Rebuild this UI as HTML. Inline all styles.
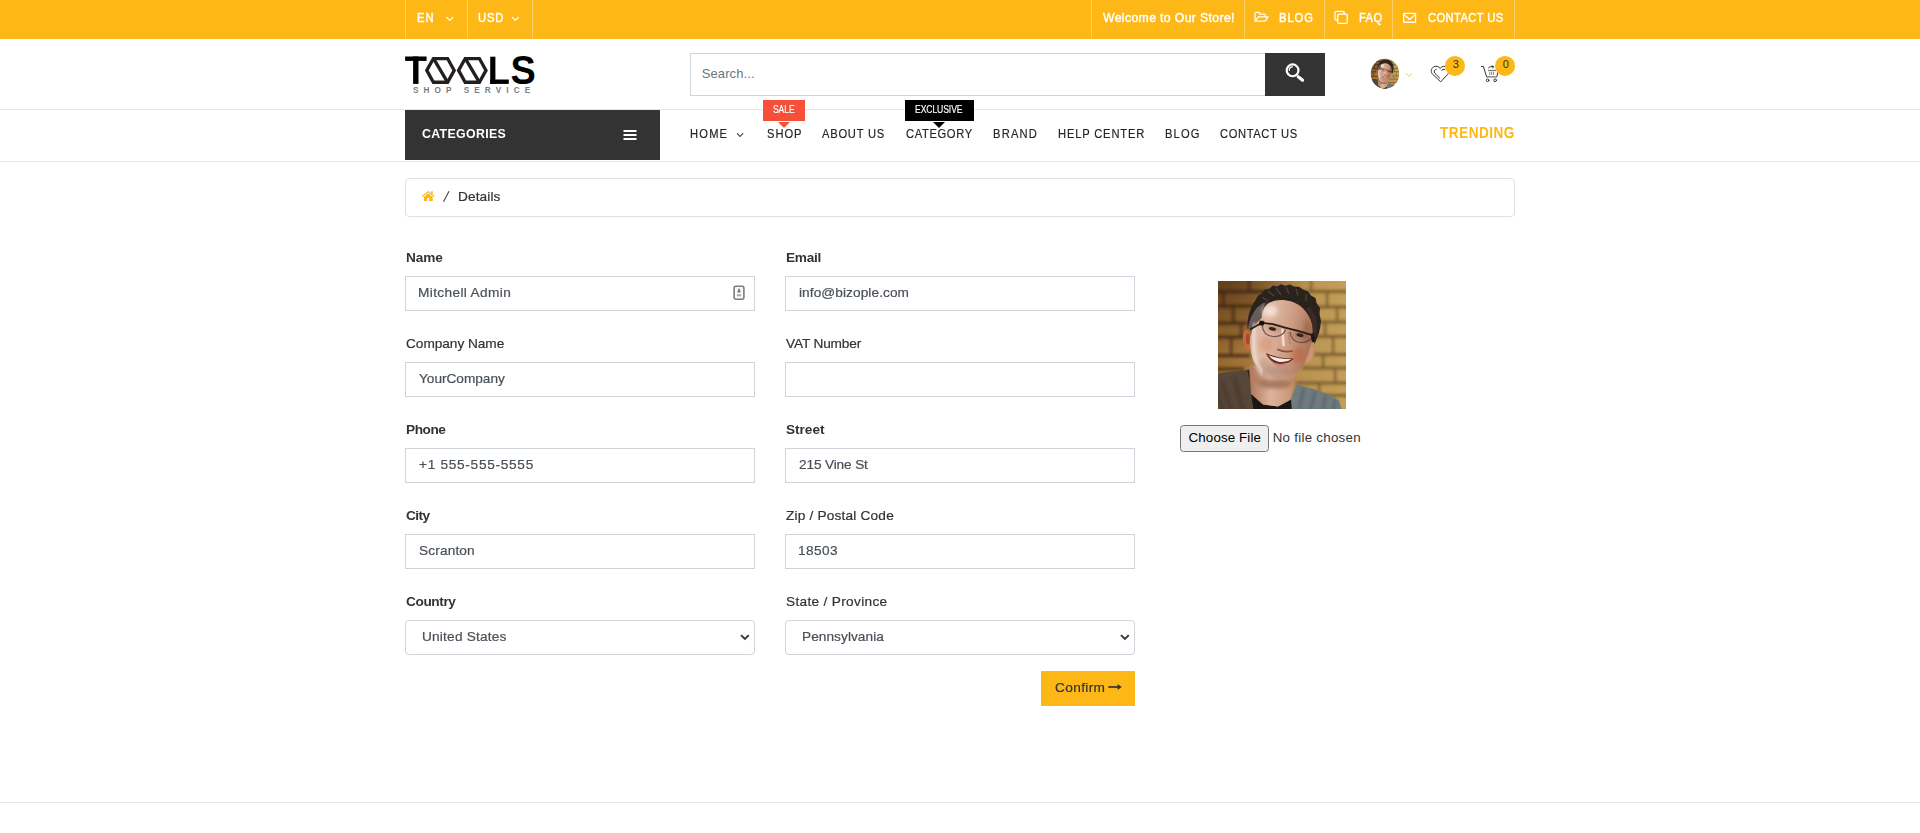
<!DOCTYPE html>
<html lang="en">
<head>
<meta charset="utf-8">
<title>Details | Tools Shop Service</title>
<style>
*{box-sizing:border-box;margin:0;padding:0}
html,body{width:1920px;height:833px;overflow:hidden;background:#fff}
body{font-family:"Liberation Sans",sans-serif;font-size:13px;color:#333}
#page{position:relative;width:1920px;height:833px;overflow:hidden;background:#fff}
.a{position:absolute;display:block}
.t{position:absolute;white-space:pre;line-height:1;transform-origin:0 0;font-family:"Liberation Sans",sans-serif}
a.t{text-decoration:none}
.tb{-webkit-text-stroke:.45px #fff}
.tb2{-webkit-text-stroke:.15px #fff}
.nv{-webkit-text-stroke:.18px currentColor}
.gp{text-rendering:geometricPrecision}
.bd{-webkit-text-stroke:.2px currentColor}
.topbar{left:0;top:0;width:1920px;height:39px;background:#fdb716}
.sep{top:0;width:1px;height:39px;background:rgba(255,255,255,.35)}
.hline{left:0;width:1920px;height:1px;background:#e6e6e6}
.field{height:35px;width:350px;border:1px solid #ced4da;background:#fff}
.sel{border-radius:4px}
svg{position:absolute;overflow:visible}
</style>
</head>

<body>
<div id="page">
<!-- top bar -->
<div class="a topbar"></div>
<i class="a sep" style="left:405px"></i><i class="a sep" style="left:467px"></i><i class="a sep" style="left:532px"></i>
<i class="a sep" style="left:1091px"></i><i class="a sep" style="left:1244px"></i><i class="a sep" style="left:1324px"></i><i class="a sep" style="left:1392px"></i><i class="a sep" style="left:1514px"></i>
<!-- header search -->
<div class="a" style="left:690px;top:53px;width:576px;height:43px;border:1px solid #ced4da;border-right:0;background:#fff"></div>
<div class="a" style="left:1265px;top:53px;width:60px;height:43px;background:#333"></div>
<!-- nav -->
<i class="a hline" style="top:109px"></i>
<i class="a hline" style="top:161px"></i>
<div class="a" style="left:405px;top:110px;width:255px;height:50px;background:#333"></div>
<div class="a" style="left:763px;top:100px;width:42px;height:21px;background:#f6503a"></div>
<div class="a" style="left:778px;top:122px;width:0;height:0;border-left:6px solid transparent;border-right:6px solid transparent;border-top:6px solid #f6503a"></div>
<div class="a" style="left:905px;top:100px;width:69px;height:21px;background:#000"></div>
<div class="a" style="left:933px;top:122px;width:0;height:0;border-left:6px solid transparent;border-right:6px solid transparent;border-top:6px solid #000"></div>
<!-- breadcrumb -->
<div class="a" style="left:405px;top:178px;width:1110px;height:39px;border:1px solid #dee2e6;border-radius:4px"></div>
<!-- form fields -->
<div class="a field" style="left:405px;top:276px"></div><div class="a field" style="left:785px;top:276px"></div>
<div class="a field" style="left:405px;top:362px"></div><div class="a field" style="left:785px;top:362px"></div>
<div class="a field" style="left:405px;top:448px"></div><div class="a field" style="left:785px;top:448px"></div>
<div class="a field" style="left:405px;top:534px"></div><div class="a field" style="left:785px;top:534px"></div>
<div class="a field sel" style="left:405px;top:620px"></div><div class="a field sel" style="left:785px;top:620px"></div>
<!-- confirm -->
<div class="a" style="left:1041px;top:671px;width:94px;height:35px;background:#fdb716"></div>
<!-- file button -->
<div class="a" style="left:1180px;top:425px;width:89px;height:27px;background:#efefef;border:1.5px solid #767676;border-radius:3.5px"></div>
<!-- footer line -->
<i class="a hline" style="top:802px"></i>

<!-- logo -->
<svg class="a" style="left:400px;top:50px" width="140" height="48" viewBox="400 50 140 48" aria-label="TOOLS shop service">
  <g fill="#000">
    <rect x="405.1" y="56.5" width="21.5" height="4.4"/>
    <rect x="413.1" y="56.5" width="5.4" height="27.4"/>
    <rect x="490.2" y="56.7" width="5.2" height="27.2"/>
    <rect x="490.2" y="79.5" width="18.6" height="4.4"/>
    <text transform="translate(510.45 84.0) scale(.94 1)" font-family="Liberation Sans, sans-serif" font-weight="700" font-size="40.3">S</text>
  </g>
  <g fill="none" stroke="#231f20" stroke-width="3.3" stroke-linejoin="miter">
    <path d="M426.8 70.4L433.4 58.55H447.6L454.2 70.4L447.6 82.25H433.4Z"/>
    <path d="M434 59.3L447.2 81.6"/>
    <path d="M458.6 70.4L465.2 58.55H479.4L486 70.4L479.4 82.25H465.2Z"/>
    <path d="M465.8 59.3L479 81.6"/>
  </g>
</svg>

<!-- icons -->
<svg class="a" style="left:0;top:0" width="1920" height="833" viewBox="0 0 1920 833">
  <!-- top bar chevrons -->
  <g fill="none" stroke="#fff" stroke-width="1.3" stroke-linecap="round" stroke-linejoin="round">
    <path d="M446.9 17.5L449.8 20.4L452.7 17.5"/>
    <path d="M512.4 17.5L515.3 20.4L518.2 17.5"/>
  </g>
  <!-- folder open -->
  <g fill="none" stroke="#fff" stroke-width="1.2" stroke-linejoin="round" stroke-linecap="round">
    <path d="M1255 20.6V13.2a.9.9 0 0 1 .9-.9H1258.8a.9.9 0 0 1 .9.9V14.2H1264.3a.9.9 0 0 1 .9.9V16.7"/>
    <path d="M1255.2 21.2L1258.3 16.9H1268.1L1265.2 21.2Z"/>
  </g>
  <!-- files -->
  <g stroke="#fff" stroke-width="1.3">
    <rect x="1334.95" y="11.4" width="9.2" height="8.6" rx="1.2" fill="none"/>
    <rect x="1337.7" y="14.05" width="9.55" height="9.25" rx="1.2" fill="#fdb716"/>
  </g>
  <!-- envelope -->
  <g fill="none" stroke="#fff" stroke-width="1.3" stroke-linejoin="round">
    <rect x="1403.65" y="13.4" width="11.9" height="8.85" rx=".6"/>
    <path d="M1403.9 14.6L1409.6 19.5L1415.3 14.6"/>
  </g>
  <!-- search magnifier -->
  <g fill="none" stroke="#fff" stroke-linecap="round">
    <circle cx="1292.6" cy="70.35" r="5.9" stroke-width="2.2"/>
    <path d="M1289.2 70.3A3.5 3.5 0 0 1 1292.5 66.9" stroke-width="1.2"/>
    <path d="M1298.2 76.7L1302.6 80.2" stroke-width="3.1"/>
  </g>
  <!-- user chevron -->
  <path d="M1406.2 73.6L1409 76.3L1411.8 73.6" fill="none" stroke="#fdb716" stroke-opacity=".8" stroke-width=".95" stroke-linecap="round" stroke-linejoin="round"/>
  <!-- heart -->
  <g fill="none" stroke="#333" stroke-width="1" stroke-linecap="round" stroke-linejoin="round">
    <path d="M1440.4 81.6L1432.6 74.2C1430.6 72.2 1430.9 68.6 1433.4 67C1435.7 65.6 1438.6 66.3 1440.2 68.4C1441.8 66.3 1444.8 65.6 1447 67C1449.5 68.6 1449.8 72.2 1447.8 74.2Z"/>
    <path d="M1436.2 69.3C1434.3 69.5 1433.4 71.8 1434.8 73.3L1439.8 78.2"/>
    <path d="M1441.6 70.2C1442.4 69.5 1443.6 69.2 1444.7 69.4"/>
  </g>
  <!-- cart -->
  <g fill="none" stroke="#333" stroke-width="1" stroke-linecap="round" stroke-linejoin="round">
    <path d="M1481.3 66.4H1483.4L1486.6 76.8"/>
    <path d="M1497.9 72.4L1496.8 76.8"/>
    <path d="M1488.5 67.9C1489.8 66.6 1491.6 66.3 1493.4 66.6M1492 65.9L1493.6 66.7L1492.6 68.1"/>
    <path d="M1489.8 72.2V74.6M1491.7 72.2V74.6M1493.6 72.2V74.6" stroke-width=".75" stroke-opacity=".8"/>
    <circle cx="1487.6" cy="80.3" r="1.35"/>
    <circle cx="1495.15" cy="80.3" r="1.35"/>
  </g>
  <path d="M1486.7 76.85H1496.8" stroke="#808080" stroke-width="1.4" fill="none"/>
  <path d="M1488.1 70.5H1496.2" stroke="#777" stroke-width="1.2" fill="none"/>
  <!-- count badges -->
  <circle cx="1455" cy="65.9" r="10" fill="#fdb716"/>
  <circle cx="1505" cy="65.9" r="10" fill="#fdb716"/>
  <!-- hamburger -->
  <g fill="#fff">
    <rect x="623.5" y="130" width="13" height="2"/>
    <rect x="623.5" y="134" width="13" height="2"/>
    <rect x="623.5" y="138" width="13" height="2"/>
  </g>
  <!-- HOME chevron -->
  <path d="M737.4 133.6L740.1 136.5L742.8 133.6" fill="none" stroke="#333" stroke-width="1.1" stroke-linecap="round" stroke-linejoin="round"/>
  <!-- breadcrumb home + slash -->
  <g fill="#fdb716">
    <path d="M428.25 190.9L434.6 196.1L433.9 196.9L428.25 192.3L422.6 196.9L421.9 196.1Z"/>
    <rect x="431.1" y="191.1" width="1.6" height="3"/>
    <path d="M428.25 193.3L432.7 196.9V200.9H429.2V198.1H427.2V200.9H423.9V196.9Z"/>
  </g>
  <path d="M443.5 201.8L449 191.2" stroke="#444" stroke-width="1.1" fill="none"/>
  <!-- autofill contact icon -->
  <rect x="734.1" y="286.3" width="9.8" height="12.9" rx="1.6" fill="#fafafa" stroke="#7c7c7c" stroke-width="1.6"/>
  <path d="M739 288.6C739.8 288.6 740 289.8 740.1 290.6L740.8 292.6H737.2L737.9 290.6C738 289.8 738.2 288.6 739 288.6Z" fill="#777"/>
  <rect x="736.9" y="294.2" width="4.2" height="2" fill="#aaa"/>
  <!-- select chevrons -->
  <g fill="none" stroke="#343a40" stroke-width="2" stroke-linejoin="miter">
    <path d="M741 635.1L744.9 638.9L748.8 635.1"/>
    <path d="M1121 635.1L1124.9 638.9L1128.8 635.1"/>
  </g>
  <!-- confirm arrow -->
  <g stroke="#333" fill="none">
    <path d="M1108.3 687H1118.5" stroke-width="1.7"/>
    <path d="M1117.6 683.9L1121.7 687L1117.6 690.1Z" fill="#333" stroke="none"/>
  </g>
</svg>

<!-- profile photo (vector approximation) -->
<svg class="a" style="left:1218px;top:281px;overflow:hidden" width="128" height="128" viewBox="0 0 128 128" role="img" aria-label="Mitchell Admin">
  <defs>
    <linearGradient id="bgG" x1="0" y1="0" x2="1" y2="0">
      <stop offset="0" stop-color="#94652e"/><stop offset=".3" stop-color="#a77a3a"/><stop offset=".62" stop-color="#b8914e"/><stop offset="1" stop-color="#c4a05b"/>
    </linearGradient>
    <radialGradient id="bgD" cx=".1" cy="-.05" r=".6">
      <stop offset="0" stop-color="#3d2410" stop-opacity=".7"/><stop offset="1" stop-color="#3d2410" stop-opacity="0"/>
    </radialGradient>
    <linearGradient id="faceG" x1="0" y1="0" x2="1" y2=".25">
      <stop offset="0" stop-color="#dcb9a8"/><stop offset=".35" stop-color="#dfb9a4"/><stop offset=".7" stop-color="#cd9c82"/><stop offset="1" stop-color="#ae785c"/>
    </linearGradient>
    <linearGradient id="neckG" x1="0" y1="0" x2="1" y2="0">
      <stop offset="0" stop-color="#ad7656"/><stop offset=".45" stop-color="#dcb49c"/><stop offset="1" stop-color="#c08e70"/>
    </linearGradient>
    <filter id="b1" x="-10%" y="-10%" width="120%" height="120%"><feGaussianBlur stdDeviation="1.4"/></filter>
    <filter id="b2" x="-10%" y="-10%" width="120%" height="120%"><feGaussianBlur stdDeviation=".55"/></filter>
    <filter id="bG" x="-5%" y="-5%" width="110%" height="110%"><feGaussianBlur stdDeviation=".6"/></filter>
    <filter id="b3" x="-20%" y="-20%" width="140%" height="140%"><feGaussianBlur stdDeviation="2.2"/></filter>
    <g id="phc">
      <rect x="-4" y="-4" width="136" height="136" fill="url(#bgG)"/>
      <rect x="-4" y="-4" width="136" height="136" fill="url(#bgD)"/>
      <!-- mortar -->
      <g filter="url(#b1)" fill="#38220e" fill-opacity=".8">
        <rect x="-4" y="9" width="60" height="3.2"/><rect x="-4" y="23.5" width="40" height="3.2"/><rect x="-4" y="40.5" width="34" height="3.2"/><rect x="-4" y="54.5" width="30" height="3.2"/><rect x="-4" y="73" width="36" height="3.2"/><rect x="-4" y="86.5" width="30" height="3"/>
        <rect x="4" y="11" width="2.4" height="13"/><rect x="14" y="26" width="2.4" height="15"/><rect x="22" y="43" width="2.2" height="12"/><rect x="12" y="57" width="2.2" height="16"/><rect x="30" y="-4" width="2.4" height="13"/>
      </g>
      <g filter="url(#b1)" fill="#644822" fill-opacity=".72">
        <rect x="70" y="9" width="62" height="3"/><rect x="96" y="24.5" width="36" height="3"/><rect x="100" y="39.5" width="32" height="3"/><rect x="98" y="54" width="34" height="3"/><rect x="96" y="72" width="36" height="3"/><rect x="84" y="85.5" width="48" height="3"/><rect x="78" y="100.5" width="54" height="3"/><rect x="98" y="113" width="34" height="3"/>
        <rect x="108" y="11" width="2.2" height="14"/><rect x="118" y="27" width="2.2" height="13"/><rect x="106" y="42" width="2.2" height="12"/><rect x="114" y="56" width="2.2" height="16"/><rect x="104" y="74" width="2.2" height="12"/><rect x="116" y="88" width="2.2" height="13"/><rect x="100" y="103" width="2.2" height="10"/><rect x="92" y="-4" width="2.2" height="13"/>
      </g>
      <!-- clothes -->
      <g filter="url(#b2)">
        <path d="M-4 93L10 91L24 89.5L31.5 88.5L35 100L37 132H-4Z" fill="#574638"/>
        <path d="M4 100L14 132M16 96L26 132M-2 108L6 132" stroke="#3c2f28" stroke-width="3.4" stroke-opacity=".45" fill="none" filter="url(#b1)"/>
        <path d="M30 89L33 99L34 112" stroke="#2a201c" stroke-width="1.6" fill="none"/>
        <path d="M70 132L74 116L78 103.5L96 108L112 114L121 119.5L125 132Z" fill="#707b80"/>
        <path d="M86 107L80 132M97 110L92 132M108 114L104 132M117 119L115 132" stroke="#48545c" stroke-width="3.2" stroke-opacity=".5" fill="none" filter="url(#b1)"/>
        <path d="M33 112L45 123.5L60 125.5L73 118.5L74 132H36Z" fill="#1a1513"/>
      </g>
      <!-- neck -->
      <path d="M31 84L33 113L45 123.5L60 125.5L72 119L76 102L79 88Z" fill="url(#neckG)" filter="url(#b2)"/>
      <path d="M36 92Q50 106 78 96L76 104Q54 112 35 100Z" fill="#a87458" fill-opacity=".45" filter="url(#b1)"/>
      <!-- ears -->
      <g filter="url(#b2)">
        <ellipse cx="29" cy="59" rx="4" ry="10.5" transform="rotate(-6 29 59)" fill="#c8683f"/>
        <ellipse cx="90.8" cy="72.5" rx="4.6" ry="9.2" transform="rotate(12 90.8 72.5)" fill="#cf9274"/>
        <ellipse cx="29.8" cy="58" rx="1.7" ry="5.5" fill="#8a3e22" fill-opacity=".7"/>
      </g>
      <!-- hair -->
      <path d="M29.5 48C29 38 31.5 28 37 20L40 14.5L43 13L47 8.5L51 8L55 4.5L59 5.5L63 3.2L67 4.8L72 3.6L76 5.4L81 5.8L85 8.6L90 10.5L93 14.5L97.5 17L98.5 22L102 27L101.5 33L103 40C102.5 48 100 56 96.5 63L92 50L60 22L44 30Z" fill="#2a221e" filter="url(#b2)"/>
      <path d="M50 10L56 15M58 7L63 14M68 6L71 13M78 8L80 15M88 13L88 20M44 16L50 20" stroke="#6a5a50" stroke-width="1.3" stroke-opacity=".55" fill="none" filter="url(#b2)"/>
      <!-- face -->
      <path d="M43.5 38C44 31 46 26 50 22.5C55 19.5 61 18.6 67 19.2C75 20 82 23.5 86.5 29C91 34 94 40.5 94.6 47C95 56 93 66 89.5 75C86 84 81 91 74 95C68 98.5 61 98.8 55 96.5C48 94 42 89 37.5 83C33.5 77 32 68 32.2 59C32.3 52 36 44 43.5 37Z" fill="url(#faceG)" filter="url(#b2)"/>
      <!-- side hair over temple -->
      <path d="M30 47C31 40 34 33 38.5 27L45 22L47.5 21.5C45 26 43.8 31 43.4 37C39 40.5 35.5 44.5 33.5 49Z" fill="#655a5c" filter="url(#b2)"/>
      <path d="M94.6 47C94.2 40 92 33 88 27.5L92 26L98 36L99 48L96.5 61Z" fill="#3a2c26" filter="url(#b2)"/>
      <!-- shading -->
      <g filter="url(#b3)">
        <ellipse cx="52" cy="30" rx="7.5" ry="5.5" fill="#f8eae1" fill-opacity=".8"/>
        <ellipse cx="80" cy="74" rx="5.5" ry="8" fill="#c4522f" fill-opacity=".45"/>
        <ellipse cx="48" cy="63" rx="7" ry="8" fill="#d07a52" fill-opacity=".35"/>
        <ellipse cx="60" cy="90" rx="13" ry="5.5" fill="#a88878" fill-opacity=".5"/>
        <ellipse cx="45" cy="85" rx="6" ry="7" fill="#a58476" fill-opacity=".35"/>
        <ellipse cx="56" cy="103" rx="16" ry="4.5" fill="#8f5f46" fill-opacity=".5"/>
        <ellipse cx="89" cy="50" rx="3.5" ry="12" fill="#8e583e" fill-opacity=".5"/>
        <ellipse cx="55" cy="47" rx="8" ry="3.2" transform="rotate(10 55 47)" fill="#9a6a54" fill-opacity=".5"/>
        <ellipse cx="82" cy="54" rx="8" ry="3.2" transform="rotate(14 82 54)" fill="#8a5a46" fill-opacity=".5"/>
      </g>
      <path d="M36.5 44Q34.5 60 37 76Q39.5 86 44 92" stroke="#f1e8e4" stroke-width="3.8" stroke-opacity=".65" stroke-linecap="round" fill="none" filter="url(#b1)"/>
      <!-- nose -->
      <g filter="url(#b2)">
        <path d="M64.5 49L65.5 64" stroke="#f3dccd" stroke-width="2.6" stroke-linecap="round" fill="none"/>
        <path d="M70.5 51L72 63" stroke="#b07a60" stroke-width="1.6" stroke-opacity=".6" fill="none"/>
        <path d="M60 68.5Q66 71.5 74 70.2" stroke="#8c4e3a" stroke-width="1.8" stroke-linecap="round" fill="none"/>
      </g>
      <!-- eyes -->
      <g filter="url(#b2)">
        <ellipse cx="54.5" cy="47.8" rx="3.6" ry="1.7" transform="rotate(10 54.5 47.8)" fill="#33241f"/>
        <ellipse cx="82" cy="54.2" rx="3.6" ry="1.7" transform="rotate(14 82 54.2)" fill="#33241f"/>
      </g>
      <!-- glasses -->
      <g fill="none" filter="url(#b2)">
        <path d="M44 44Q45 54.5 55 55.5Q65 56 67.5 48.5" stroke="#5a4036" stroke-opacity=".8" stroke-width="1.25"/>
        <path d="M72 50.5Q73 60.5 82.5 61.5Q92 61.5 94 55.5" stroke="#5a4036" stroke-opacity=".8" stroke-width="1.25"/>
        <path d="M42 41.6L55 43.2L67 46.6L80 49.8L95 54.4" stroke="#2c1d18" stroke-width="1.8" stroke-linejoin="round"/>
        <path d="M42.5 42.5L32 48.6" stroke="#2c1d18" stroke-width="1.7"/>
        <path d="M94.3 52.5L95.5 61" stroke="#1e1512" stroke-width="3.4"/>
      </g>
      <rect x="41.3" y="39.8" width="4.8" height="4.6" fill="#15100e" filter="url(#b2)" transform="rotate(10 43.7 42)"/>
      <!-- mouth -->
      <g filter="url(#b2)">
        <path d="M47.8 72Q60 77.8 76 77.6Q70 84 61 83.2Q52 81.5 47.8 72Z" fill="#6a2f26"/>
        <path d="M50.5 74.2Q60 78.2 73.5 78.3Q69 81.6 61.5 80.9Q54.5 79.6 50.5 74.2Z" fill="#f6ebe2"/>
        <path d="M53 80.6Q60 84.6 70 81.6Q66 85.8 60 85Q55.5 84 53 80.6Z" fill="#c98082"/>
      </g>
    </g>
  </defs>
  <g filter="url(#bG)"><use href="#phc"/></g>
</svg>
<!-- header avatar -->
<svg class="a" style="left:1370px;top:58px;overflow:hidden" width="30" height="32" viewBox="0 0 30 32">
  <defs><clipPath id="avc"><ellipse cx="15" cy="15.75" rx="14.2" ry="15"/></clipPath></defs>
  <g clip-path="url(#avc)"><use href="#phc" transform="translate(.8 .75) scale(.2219 .2344)"/></g>
</svg>

<!-- text -->
<nav aria-label="Top bar">
<a href="#" class="t tb" style="left:416.84px;top:11.00px;font-size:13px;color:#fff;letter-spacing:1.120px;transform:scaleX(0.86)">EN</a>
<a href="#" class="t tb" style="left:477.94px;top:11.00px;font-size:13px;color:#fff;letter-spacing:1.040px;transform:scaleX(0.86)">USD</a>
<a href="#" class="t tb" style="left:1102.60px;top:11.00px;font-size:13px;color:#fff;letter-spacing:0.395px;transform:scaleX(0.94)">Welcome to Our Store!</a>
<a href="#" class="t tb" style="left:1279.44px;top:11.00px;font-size:13px;color:#fff;letter-spacing:1.081px;transform:scaleX(0.86)">BLOG</a>
<a href="#" class="t tb" style="left:1358.54px;top:11.00px;font-size:13px;color:#fff;letter-spacing:0.460px;transform:scaleX(0.86)">FAQ</a>
<a href="#" class="t tb" style="left:1427.80px;top:11.00px;font-size:13px;color:#fff;letter-spacing:0.449px;transform:scaleX(0.86)">CONTACT US</a>
</nav>
<nav aria-label="Main menu">
<a href="#" class="t" style="left:421.60px;top:127.00px;font-size:13px;color:#fff;letter-spacing:0.356px;font-weight:700;transform:scaleX(0.95)">CATEGORIES</a>
<a href="#" class="t nv" style="left:689.64px;top:126.80px;font-size:13px;color:#252525;letter-spacing:1.371px;transform:scaleX(0.86)">HOME</a>
<a href="#" class="t nv" style="left:767.00px;top:126.80px;font-size:13px;color:#252525;letter-spacing:1.121px;transform:scaleX(0.86)">SHOP</a>
<a href="#" class="t nv" style="left:822.20px;top:126.80px;font-size:13px;color:#252525;letter-spacing:0.875px;transform:scaleX(0.86)">ABOUT US</a>
<a href="#" class="t nv" style="left:906.00px;top:126.80px;font-size:13px;color:#252525;letter-spacing:0.732px;transform:scaleX(0.86)">CATEGORY</a>
<a href="#" class="t nv" style="left:993.44px;top:126.80px;font-size:13px;color:#252525;letter-spacing:1.383px;transform:scaleX(0.86)">BRAND</a>
<a href="#" class="t nv" style="left:1057.84px;top:126.80px;font-size:13px;color:#252525;letter-spacing:0.956px;transform:scaleX(0.86)">HELP CENTER</a>
<a href="#" class="t nv" style="left:1164.54px;top:126.80px;font-size:13px;color:#252525;letter-spacing:1.314px;transform:scaleX(0.86)">BLOG</a>
<a href="#" class="t nv" style="left:1219.90px;top:126.80px;font-size:13px;color:#252525;letter-spacing:0.708px;transform:scaleX(0.86)">CONTACT US</a>
<a href="#" class="t gp" style="left:1440.20px;top:126.00px;font-size:16px;color:#fdb716;letter-spacing:0.564px;font-weight:700;transform:scaleX(0.85)">TRENDING</a>
<a href="#" class="t tb2" style="left:772.90px;top:104.53px;font-size:10px;color:#fff;letter-spacing:-0.145px;transform:scaleX(0.86)">SALE</a>
<a href="#" class="t tb2" style="left:915.10px;top:104.53px;font-size:10px;color:#fff;letter-spacing:-0.110px;transform:scaleX(0.86)">EXCLUSIVE</a>
<a href="#" class="t" style="left:412.90px;top:86.96px;font-size:8.2px;color:#7d7d7d;letter-spacing:5.099px;font-weight:700">SHOP SERVICE</a>
</nav>
<div role="search">
<span class="t" style="left:701.70px;top:66.80px;font-size:13px;color:#6c757d;letter-spacing:0.111px">Search...</span>
</div>
<div aria-label="Wishlist and cart counts">
<span class="t" style="left:1452.70px;top:58.69px;font-size:11px;color:#333;letter-spacing:0.000px">3</span>
<span class="t" style="left:1502.70px;top:58.69px;font-size:11px;color:#333;letter-spacing:0.000px">0</span>
</div>
<nav aria-label="Breadcrumb">
<span class="t bd" style="left:457.65px;top:189.70px;font-size:13px;color:#333;letter-spacing:0.111px;transform:scaleX(1.05)">Details</span>
</nav>
<form aria-label="Details">
<label class="t" style="left:405.70px;top:250.80px;font-size:13px;color:#333;letter-spacing:-0.138px;font-weight:700;transform:scaleX(1.05)">Name</label>
<label class="t" style="left:785.70px;top:250.80px;font-size:13px;color:#333;letter-spacing:-0.280px;font-weight:700;transform:scaleX(1.05)">Email</label>
<label class="t bd" style="left:405.70px;top:336.80px;font-size:13px;color:#333;letter-spacing:-0.033px;transform:scaleX(1.05)">Company Name</label>
<label class="t bd" style="left:785.70px;top:336.80px;font-size:13px;color:#333;letter-spacing:-0.145px;transform:scaleX(1.05)">VAT Number</label>
<label class="t" style="left:405.70px;top:422.80px;font-size:13px;color:#333;letter-spacing:-0.445px;font-weight:700;transform:scaleX(1.05)">Phone</label>
<label class="t" style="left:785.70px;top:422.80px;font-size:13px;color:#333;letter-spacing:-0.037px;font-weight:700;transform:scaleX(1.05)">Street</label>
<label class="t" style="left:405.70px;top:508.80px;font-size:13px;color:#333;letter-spacing:-0.507px;font-weight:700;transform:scaleX(1.05)">City</label>
<label class="t bd" style="left:785.70px;top:508.80px;font-size:13px;color:#333;letter-spacing:0.181px;transform:scaleX(1.05)">Zip / Postal Code</label>
<label class="t" style="left:405.70px;top:594.80px;font-size:13px;color:#333;letter-spacing:-0.386px;font-weight:700;transform:scaleX(1.05)">Country</label>
<label class="t bd" style="left:785.70px;top:594.80px;font-size:13px;color:#333;letter-spacing:0.304px;transform:scaleX(1.05)">State / Province</label>
</form>
<section aria-label="Field values">
<span class="t bd" style="left:417.85px;top:285.70px;font-size:13px;color:#495057;letter-spacing:0.347px;transform:scaleX(1.05)">Mitchell Admin</span>
<span class="t bd" style="left:798.50px;top:285.70px;font-size:13px;color:#495057;letter-spacing:0.081px;transform:scaleX(1.05)">info@bizople.com</span>
<span class="t bd" style="left:418.90px;top:371.70px;font-size:13px;color:#495057;letter-spacing:-0.021px;transform:scaleX(1.05)">YourCompany</span>
<span class="t bd" style="left:418.90px;top:457.70px;font-size:13px;color:#495057;letter-spacing:0.672px;transform:scaleX(1.05)">+1 555-555-5555</span>
<span class="t bd" style="left:798.90px;top:457.70px;font-size:13px;color:#495057;letter-spacing:-0.137px;transform:scaleX(1.05)">215 Vine St</span>
<span class="t bd" style="left:418.90px;top:543.70px;font-size:13px;color:#495057;letter-spacing:0.137px;transform:scaleX(1.05)">Scranton</span>
<span class="t bd" style="left:797.80px;top:543.70px;font-size:13px;color:#495057;letter-spacing:0.377px;transform:scaleX(1.05)">18503</span>
<span class="t bd" style="left:421.65px;top:629.80px;font-size:13px;color:#495057;letter-spacing:0.197px;transform:scaleX(1.05)">United States</span>
<span class="t bd" style="left:801.65px;top:629.80px;font-size:13px;color:#495057;letter-spacing:0.056px;transform:scaleX(1.05)">Pennsylvania</span>
<span class="t bd" style="left:1055.30px;top:680.90px;font-size:13px;color:#333;letter-spacing:0.347px;transform:scaleX(1.05)">Confirm</span>
<span class="t" style="left:1188.60px;top:430.62px;font-size:13.33px;color:#000;letter-spacing:0.119px">Choose File</span>
<span class="t" style="left:1272.70px;top:430.62px;font-size:13.33px;color:#333;letter-spacing:0.266px">No file chosen</span>
</section>
</div>
</body>
</html>
